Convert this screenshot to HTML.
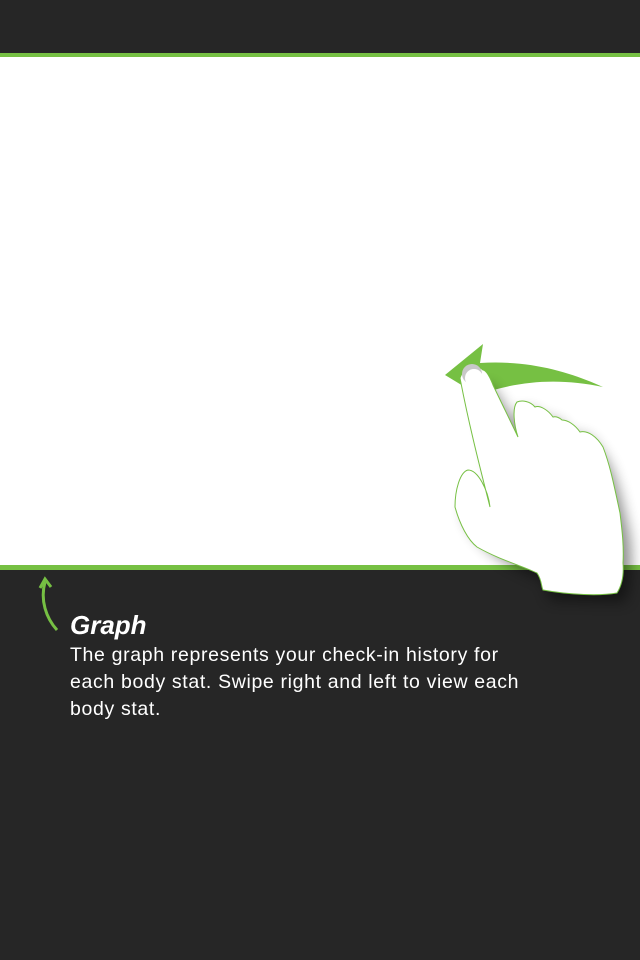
<!DOCTYPE html>
<html><head><style>
body{margin:0;width:640px;height:960px;background:#262626;position:relative;overflow:hidden;font-family:"Liberation Sans",sans-serif}
.w{position:absolute;left:0;top:57px;width:640px;height:508px;background:#fff}
.g1{position:absolute;left:0;top:53px;width:640px;height:4px;background:#76c043}
.g2{position:absolute;left:0;top:565px;width:640px;height:5px;background:#76c043}
h1{position:absolute;left:70px;top:610px;margin:0;color:#fff;font-style:italic;font-weight:bold;font-size:26px}
p{position:absolute;left:70px;top:642px;margin:0;color:#fff;font-size:19.5px;letter-spacing:0.65px;line-height:27px;white-space:nowrap}
svg{position:absolute;left:0;top:0}
</style></head><body>
<div class="g1"></div><div class="w"></div><div class="g2"></div>
<svg width="640" height="960">
<defs><filter id="s" x="-30%" y="-30%" width="160%" height="160%"><feGaussianBlur stdDeviation="7"/></filter></defs>
<path d="M445,375 L483,344 L480,363 C530,360 570,372 603,387 C560,378 520,380 478,395 Z" fill="#76c043"/>
<path d="M475,390 C482,420 490,460 498,510 L475,515 C468,505 462,495 466,482 L465,515 C475,545 505,565 545,580 L550,600 L625,602 C633,575 633,545 625,518 C618,485 610,460 595,445 C590,437 580,433 570,437 C565,425 555,417 545,420 C535,410 523,405 517,415 L523,445 C515,425 505,405 490,385 Z" fill="#000" opacity=".45" filter="url(#s)"/>
<path d="M460,378 C468,420 478,460 490,507 C488,490 478,470 468,470 C460,472 455,490 455,507 C460,525 468,540 477,547 C500,560 520,565 537,573 C542,580 541,586 543,590 C570,595 600,596 617,593 C622,585 624,575 623,563 C624,545 622,530 620,513 C614,485 610,465 603,447 C597,437 588,430 580,432 C575,425 568,420 562,420 C560,418 556,416 553,417 C548,410 540,405 535,407 C530,401 522,400 517,402 C512,408 514,425 518,437 C510,420 500,400 493,385 C490,377 486,370 483,370 C476,364 464,366 460,378 Z" fill="#fff" stroke="#76c043" stroke-width="1"/>
<circle cx="472" cy="374" r="10" fill="#c8c8c8"/>
<circle cx="474" cy="378" r="9" fill="#fff"/>
<path d="M57,630 C46,618 40,600 45,582" stroke="#76c043" stroke-width="3" fill="none"/>
<path d="M40,588 L45,579 L51,587" stroke="#76c043" stroke-width="3" fill="none"/>
</svg>
<h1>Graph</h1>
<p>The graph represents your check-in history for<br>each body stat. Swipe right and left to view each<br>body stat.</p>
</body></html>
